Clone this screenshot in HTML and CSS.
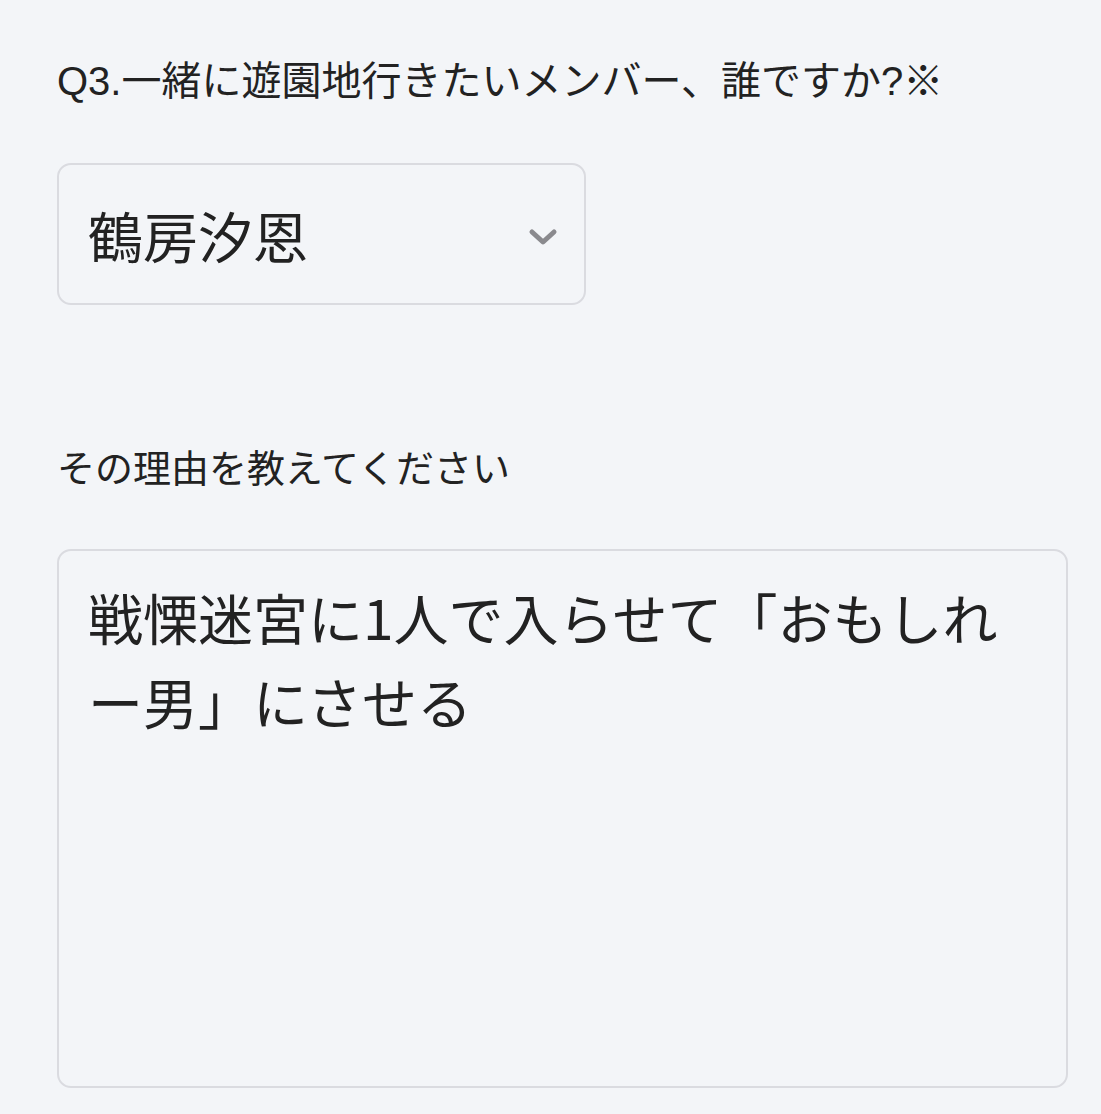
FILE: index.html
```html
<!DOCTYPE html>
<html lang="ja">
<head>
  <meta charset="utf-8">
  <title>アンケート</title>
  <link rel="stylesheet" href="styles.css">
</head>
<body>
  <div class="form">
    <p class="question">Q3.一緒に遊園地行きたいメンバー、誰ですか?※</p>

    <div class="select">
      <span class="select-value">鶴房汐恩</span>
      <svg class="chevron" width="30" height="20" viewBox="0 0 30 20">
        <polyline points="4,5 15,15 26,5" fill="none" stroke="#8a8a8e" stroke-width="5" stroke-linecap="round" stroke-linejoin="round"/>
      </svg>
    </div>

    <p class="label">その理由を教えてください</p>

    <textarea class="answer" readonly>戦慄迷宮に1人で入らせて「おもしれー男」にさせる</textarea>
  </div>
</body>
</html>
```

FILE: styles.css
```css
body {
  margin: 0;
  background-color: #f3f5f8;
  font-family: "Liberation Sans", "Noto Sans CJK JP", sans-serif;
  color: #222222;
}
.form {
  display: flex;
  flex-direction: column;
  align-items: flex-start;
  padding: 51px 33px 26px 57px;
}
.question {
  margin: 0;
  font-size: 40px;
  line-height: 60px;
}
.select {
  margin-top: 52px;
  width: 529px;
  height: 142px;
  box-sizing: border-box;
  border: 2px solid #dadbe0;
  border-radius: 14px;
  display: flex;
  align-items: center;
  justify-content: space-between;
  padding: 0 26px 0 29px;
}
.select-value {
  font-family: "Noto Sans CJK JP", sans-serif;
  font-size: 55px;
  line-height: 1;
}
.chevron {
  margin-top: 6px;
}
.label {
  margin: 136px 0 0;
  font-size: 38px;
  line-height: 56px;
}
.answer {
  margin-top: 52px;
  width: 100%;
  height: 539px;
  box-sizing: border-box;
  border: 2px solid #dadbe0;
  border-radius: 14px;
  background-color: #f3f5f8;
  padding: 23px 30px 20px 29px;
  font-family: "Noto Sans CJK JP", sans-serif;
  font-size: 55px;
  line-height: 84px;
  color: #222222;
  resize: none;
  outline: none;
  overflow: hidden;
}
```
